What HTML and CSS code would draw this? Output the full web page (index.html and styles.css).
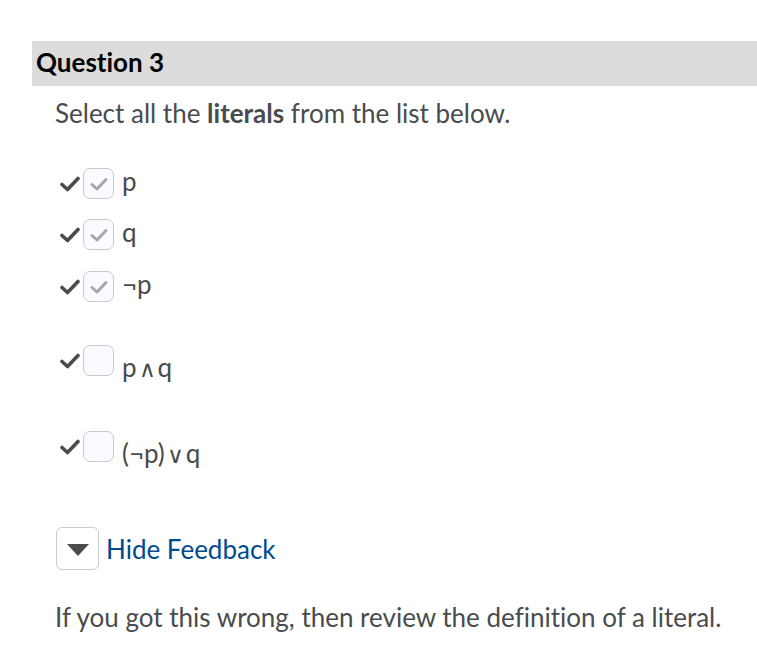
FILE: index.html
```html
<!DOCTYPE html>
<html>
<head>
<meta charset="utf-8">
<link rel="stylesheet" href="styles.css">
</head>
<body>
<div class="question">
  <h2 class="q-title">Question 3</h2>
  <div class="q-body">
    <p class="prompt">Select all the <strong>literals</strong> from the list below.</p>
    <ul class="options">
      <li class="opt opt-1">
        <svg class="mark" viewBox="0 0 20 16"><path d="M2 8.5 L7.5 13.5 L18 2.5" /></svg>
        <span class="box checked"><svg viewBox="0 0 20 16"><path d="M3 8.5 L8 13 L17 3.5" /></svg></span>
        <span class="label">p</span>
      </li>
      <li class="opt opt-2">
        <svg class="mark" viewBox="0 0 20 16"><path d="M2 8.5 L7.5 13.5 L18 2.5" /></svg>
        <span class="box checked"><svg viewBox="0 0 20 16"><path d="M3 8.5 L8 13 L17 3.5" /></svg></span>
        <span class="label">q</span>
      </li>
      <li class="opt opt-3">
        <svg class="mark" viewBox="0 0 20 16"><path d="M2 8.5 L7.5 13.5 L18 2.5" /></svg>
        <span class="box checked"><svg viewBox="0 0 20 16"><path d="M3 8.5 L8 13 L17 3.5" /></svg></span>
        <span class="label">¬p</span>
      </li>
      <li class="opt opt-4">
        <svg class="mark" viewBox="0 0 20 16"><path d="M2 8.5 L7.5 13.5 L18 2.5" /></svg>
        <span class="box"></span>
        <span class="label math">p<span class="op">∧</span>q</span>
      </li>
      <li class="opt opt-5">
        <svg class="mark" viewBox="0 0 20 16"><path d="M2 8.5 L7.5 13.5 L18 2.5" /></svg>
        <span class="box"></span>
        <span class="label math">(¬p)<span class="op">∨</span>q</span>
      </li>
    </ul>
    <div class="feedback-toggle">
      <button class="toggle-btn" type="button"><span class="tri"></span></button>
      <a class="toggle-link" href="#">Hide Feedback</a>
    </div>
    <p class="feedback">If you got this wrong, then review the definition of a literal.</p>
  </div>
</div>
</body>
</html>
```

FILE: styles.css
```css
html, body {
  margin: 0;
  padding: 0;
  background: #ffffff;
}
body {
  font-family: Lato, "Open Sans", sans-serif;
  color: #494c4e;
  font-variant-ligatures: none;
}
.question {
  margin-top: 41px;
  margin-left: 32px;
}
.q-title {
  margin: 0;
  background: #dcdcdc;
  height: 45px;
  line-height: 43px;
  padding-left: 4px;
  font-size: 26px;
  font-weight: 700;
  color: #000000;
}
.q-body {
  padding-left: 23px;
}
.prompt {
  margin: 0;
  padding-top: 12px;
  font-size: 26px;
  line-height: 30px;
}
.prompt strong {
  font-weight: 700;
}
.options {
  list-style: none;
  margin: 0;
  padding: 0;
  margin-top: 40px;
}
.opt {
  display: flex;
  align-items: center;
  height: 31px;
}
.opt-2 { margin-top: 20px; }
.opt-3 { margin-top: 21px; }
.opt-4 { margin-top: 43px; }
.opt-5 { margin-top: 55px; }
.mark {
  width: 20px;
  height: 16px;
  margin-left: 5px;
  margin-right: 3px;
  fill: none;
  stroke: #494c4e;
  stroke-width: 3.6;
  stroke-linecap: round;
  stroke-linejoin: round;
}
.box {
  box-sizing: border-box;
  width: 31px;
  height: 31px;
  border: 1px solid #c8cacc;
  border-radius: 7px;
  background: #f9fbff;
  display: flex;
  align-items: center;
  justify-content: center;
}
.box svg {
  width: 20px;
  height: 16px;
  fill: none;
  stroke: #a5a7a9;
  stroke-width: 3;
  stroke-linecap: round;
  stroke-linejoin: round;
}
.label {
  margin-left: 8px;
  font-size: 26px;
  line-height: 28px;
  color: #494c4e;
  position: relative;
  top: -3px;
}
.math {
  top: 7px;
}
.op {
  font-family: "DejaVu Sans", sans-serif;
  font-size: 23px;
  font-weight: 200;
  margin: 0 2px;
}
.feedback-toggle {
  display: flex;
  align-items: center;
  margin-top: 65px;
}
.toggle-btn {
  box-sizing: border-box;
  width: 43px;
  height: 43px;
  margin-left: 1px;
  border: 1px solid #c8cacc;
  border-radius: 6px;
  background: #ffffff;
  padding: 0;
  display: flex;
  align-items: center;
  justify-content: center;
}
.tri {
  width: 0;
  height: 0;
  border-left: 11px solid transparent;
  border-right: 11px solid transparent;
  border-top: 12px solid #494c4e;
  margin-top: 2px;
}
.toggle-link {
  margin-left: 7px;
  font-size: 26px;
  color: #004a8f;
  text-decoration: none;
}
.feedback {
  margin: 0;
  margin-top: 32px;
  font-size: 26px;
  line-height: 30px;
}
```
